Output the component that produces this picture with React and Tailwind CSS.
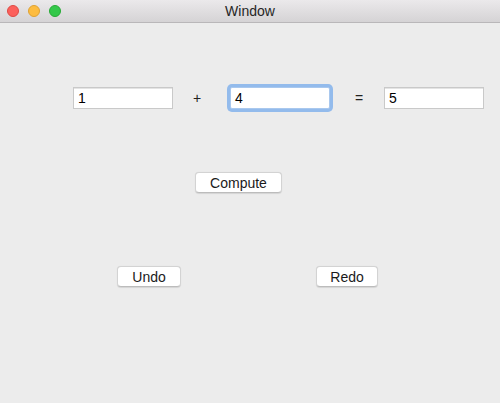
import React from "react";

const font = { fontFamily: '"Liberation Sans", "DejaVu Sans", sans-serif' };

const Field = ({ value, focused = false }) => (
  <div
    className={`w-[100px] h-[22px] bg-white flex items-center pl-[4px] text-[14px] text-black ${
      focused
        ? "border border-[#a9c8ee] rounded-[2px] ring-[3px] ring-[#93bbec]"
        : "border border-[#c9c9c9] shadow-[inset_0_1px_0_#e4e4e4]"
    }`}
  >
    {value}
  </div>
);

const Button = ({ children, width }) => (
  <button
    type="button"
    className={`${width} h-[21px] bg-white rounded-[4px] border border-[#d3d3d3] border-b-[#bcbcbc] shadow-[0_0.5px_1px_rgba(0,0,0,0.1)] text-[14px] text-[#1a1a1a] flex items-center justify-center leading-none`}
  >
    {children}
  </button>
);

export default function App() {
  return (
    <div className="w-[500px] h-[403px] bg-[#ececec] flex flex-col overflow-hidden" style={font}>
      {/* title bar */}
      <div className="relative h-[23px] shrink-0 bg-gradient-to-b from-[#ebe9eb] to-[#d5d3d5] border-b border-[#b9b7b9] flex items-center justify-center">
        <div className="absolute left-[7px] top-[5px] flex gap-[9px]">
          <span className="w-[12px] h-[12px] rounded-full bg-[#fc605c] border border-[#de4a45]" />
          <span className="w-[12px] h-[12px] rounded-full bg-[#fdbc40] border border-[#dea233]" />
          <span className="w-[12px] h-[12px] rounded-full bg-[#34c84a] border border-[#27aa35]" />
        </div>
        <span className="text-[14px] text-[#262626]">Window</span>
      </div>

      {/* equation row */}
      <div className="mt-[64px] pl-[73px] flex items-center">
        <Field value="1" />
        <span className="w-[48px] text-center text-[14px] text-[#222]">+</span>
        <div className="ml-[9px]">
          <Field value="4" focused />
        </div>
        <span className="ml-[14px] w-[30px] text-center text-[14px] text-[#222]">=</span>
        <div className="ml-[10px]">
          <Field value="5" />
        </div>
      </div>

      <div className="mt-[63px] pl-[195px] flex">
        <Button width="w-[87px]">Compute</Button>
      </div>

      <div className="mt-[73px] pl-[117px] flex">
        <Button width="w-[64px]">Undo</Button>
        <div className="ml-[135px]">
          <Button width="w-[62px]">Redo</Button>
        </div>
      </div>
    </div>
  );
}
